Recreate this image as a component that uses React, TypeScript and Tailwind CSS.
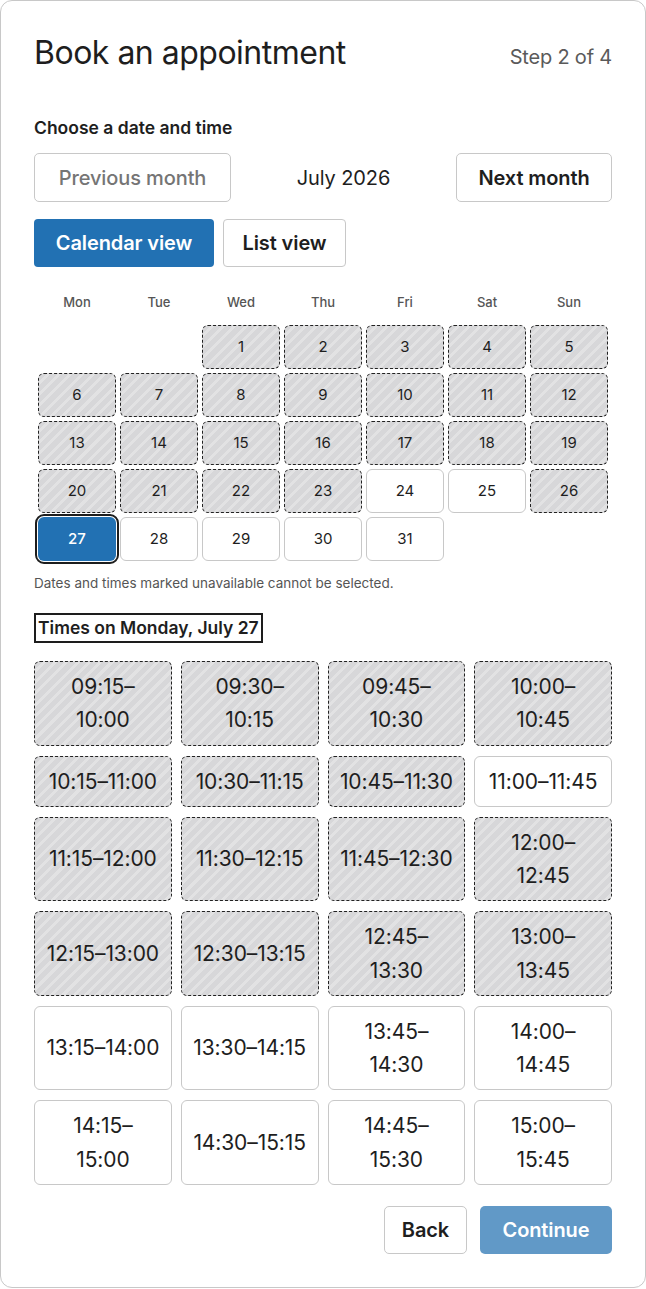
import React from "react";

const hatch =
  "bg-[repeating-linear-gradient(135deg,#d7d7d9_0px,#d7d7d9_5px,#e2e2e3_5px,#e2e2e3_8px)]";

type Day = { n: number; state: "un" | "av" | "sel" } | null;

const unavailableDays = new Set([
  1, 2, 3, 4, 5, 6, 7, 8, 9, 10, 11, 12, 13, 14, 15, 16, 17, 18, 19, 20, 21, 22, 23, 26,
]);

function buildDays(): Day[] {
  const out: Day[] = [null, null];
  for (let i = 1; i <= 31; i++) {
    out.push({ n: i, state: i === 27 ? "sel" : unavailableDays.has(i) ? "un" : "av" });
  }
  while (out.length % 7 !== 0) out.push(null);
  return out;
}

type Slot = { a: string; b: string; wrap: boolean; un: boolean };

const slots: Slot[] = [
  { a: "09:15", b: "10:00", wrap: true, un: true },
  { a: "09:30", b: "10:15", wrap: true, un: true },
  { a: "09:45", b: "10:30", wrap: true, un: true },
  { a: "10:00", b: "10:45", wrap: true, un: true },
  { a: "10:15", b: "11:00", wrap: false, un: true },
  { a: "10:30", b: "11:15", wrap: false, un: true },
  { a: "10:45", b: "11:30", wrap: false, un: true },
  { a: "11:00", b: "11:45", wrap: false, un: false },
  { a: "11:15", b: "12:00", wrap: false, un: true },
  { a: "11:30", b: "12:15", wrap: false, un: true },
  { a: "11:45", b: "12:30", wrap: false, un: true },
  { a: "12:00", b: "12:45", wrap: true, un: true },
  { a: "12:15", b: "13:00", wrap: false, un: true },
  { a: "12:30", b: "13:15", wrap: false, un: true },
  { a: "12:45", b: "13:30", wrap: true, un: true },
  { a: "13:00", b: "13:45", wrap: true, un: true },
  { a: "13:15", b: "14:00", wrap: false, un: false },
  { a: "13:30", b: "14:15", wrap: false, un: false },
  { a: "13:45", b: "14:30", wrap: true, un: false },
  { a: "14:00", b: "14:45", wrap: true, un: false },
  { a: "14:15", b: "15:00", wrap: true, un: false },
  { a: "14:30", b: "15:15", wrap: false, un: false },
  { a: "14:45", b: "15:30", wrap: true, un: false },
  { a: "15:00", b: "15:45", wrap: true, un: false },
];

export default function App() {
  const days = buildDays();
  const headers = ["Mon", "Tue", "Wed", "Thu", "Fri", "Sat", "Sun"];
  return (
    <div className="bg-white w-[646px] min-h-[1289px] font-['Inter','Noto_Sans',sans-serif] text-[#1e1e1e]">
      <div className="border border-[#c8c8c8] rounded-xl bg-white px-[33px] pt-[32px] pb-[33px]">
        <div className="flex items-baseline justify-between">
          <h1 className="text-[32px] leading-[40px] font-normal tracking-[-0.5px] text-[#1e1e1e]">
            Book an appointment
          </h1>
          <span className="text-[20px] text-[#5a5a5a] tracking-[-0.2px]">Step 2 of 4</span>
        </div>

        <h2 className="mt-[43px] text-[17.5px] leading-[24px] font-semibold tracking-[0px]">
          Choose a date and time
        </h2>

        <div className="mt-[13px] flex items-center justify-between">
          <button className="h-[49px] w-[197px] border border-[#c8c8c8] rounded-[5px] text-[20px] font-medium text-[#757575] tracking-[-0.1px]">
            Previous month
          </button>
          <span className="text-[20px] text-[#1e1e1e] tracking-[-0.1px]">July 2026</span>
          <button className="h-[49px] w-[156px] border border-[#c8c8c8] rounded-[5px] text-[20px] font-semibold text-[#1e1e1e] tracking-[-0.1px]">
            Next month
          </button>
        </div>

        <div className="mt-[17px] flex gap-[9px]">
          <button className="h-[48px] w-[180px] rounded-[4px] bg-[#2271b3] text-white text-[20px] font-semibold tracking-[-0.1px]">
            Calendar view
          </button>
          <button className="h-[48px] w-[123px] rounded-[4px] border border-[#c8c8c8] bg-white text-[20px] font-semibold tracking-[-0.1px]">
            List view
          </button>
        </div>

        <div className="mt-[14px] p-1 grid grid-cols-7 gap-1">
          {headers.map((h) => (
            <div
              key={h}
              className="h-9 flex items-center justify-center text-[13px] font-medium text-[#555]"
            >
              {h}
            </div>
          ))}
          {days.map((d, i) =>
            d === null ? (
              <div key={i} className="h-11" />
            ) : d.state === "un" ? (
              <div
                key={i}
                className={`h-11 flex items-center justify-center rounded-[6px] border border-dashed border-[#222] text-[15px] text-[#1e1e1e] ${hatch}`}
              >
                {d.n}
              </div>
            ) : d.state === "sel" ? (
              <div
                key={i}
                className="h-11 flex items-center justify-center rounded-[6px] bg-[#2271b3] text-white text-[15px] font-medium outline-2 outline-offset-1 outline-[#1d1d1d]"
              >
                {d.n}
              </div>
            ) : (
              <div
                key={i}
                className="h-11 flex items-center justify-center rounded-[6px] border border-[#c8c8c8] bg-white text-[15px] text-[#1e1e1e]"
              >
                {d.n}
              </div>
            )
          )}
        </div>

        <p className="mt-2 text-[13.5px] leading-[20px] text-[#555]">
          Dates and times marked unavailable cannot be selected.
        </p>

        <div className="mt-[20px]">
          <h3 className="inline-block border-2 border-[#1d1d1d] px-[2px] text-[17.5px] leading-[26px] font-semibold">
            Times on Monday, July 27
          </h3>
        </div>

        <div className="mt-[18px] grid grid-cols-4 gap-x-[9px] gap-y-[10px]">
          {slots.map((s, i) => (
            <div
              key={i}
              className={`flex items-center justify-center text-center rounded-[6px] py-[8px] text-[21px] leading-[33.25px] tracking-[-0.1px] ${
                s.un
                  ? `border border-dashed border-[#222] ${hatch}`
                  : "border border-[#c8c8c8] bg-white"
              }`}
            >
              {s.wrap ? (
                <span>
                  {s.a}–
                  <br />
                  {s.b}
                </span>
              ) : (
                <span className="whitespace-nowrap">
                  {s.a}–{s.b}
                </span>
              )}
            </div>
          ))}
        </div>

        <div className="mt-[21px] flex justify-end gap-[13px]">
          <button className="h-[48px] w-[83px] rounded-[5px] border border-[#c8c8c8] bg-white text-[20px] font-semibold tracking-[-0.1px]">
            Back
          </button>
          <button className="h-[48px] w-[132px] rounded-[5px] bg-[#6199c7] text-white text-[20px] font-semibold tracking-[-0.1px]">
            Continue
          </button>
        </div>
      </div>
    </div>
  );
}
